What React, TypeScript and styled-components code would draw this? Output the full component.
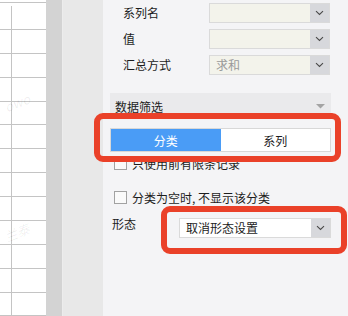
import React from 'react';
import styled, { createGlobalStyle } from 'styled-components';

const GlobalStyle = createGlobalStyle`
  html, body {
    margin: 0;
    padding: 0;
  }
  body {
    font-family: "Noto Sans CJK SC", "Noto Sans", sans-serif;
    font-size: 12px;
    color: #1c1c1c;
  }
`;

const Screen = styled.div`
  display: flex;
  width: 348px;
  height: 316px;
  overflow: hidden;
  position: relative;
`;

const Sheet = styled.div`
  width: 46px;
  flex: none;
  background: #fff;
  position: relative;
  overflow: hidden;
  padding-top: 3px;
  box-sizing: border-box;
  border-top: 1px solid #c4c4c4;
  margin-top: 2px;
`;

const SheetRow = styled.div<{ $h: number }>`
  display: flex;
  height: ${p => p.$h}px;
  border-bottom: 1px solid #c4c4c4;
  box-sizing: border-box;
`;

const SheetCell = styled.div<{ $w: number }>`
  width: ${p => p.$w}px;
  flex: none;
  border-right: 1px solid #c4c4c4;
  box-sizing: border-box;
`;

const Watermark = styled.span<{ $top: number }>`
  position: absolute;
  left: 4px;
  top: ${p => p.$top}px;
  font-size: 13px;
  font-style: italic;
  color: rgba(0, 0, 0, 0.07);
  transform: rotate(-22deg);
  white-space: nowrap;
`;

const Gutter = styled.div`
  width: 16px;
  flex: none;
  background: #d3d3d3;
`;

const Rail = styled.div`
  width: 41px;
  flex: none;
  background: #e8e8e8;
  border-left: 1px solid #ececec;
  box-sizing: border-box;
`;

const Panel = styled.div`
  flex: 1;
  background: #f4f4f6;
  padding: 3px 17px 0 7px;
  box-sizing: border-box;
`;

const Fields = styled.div`
  display: flex;
  flex-direction: column;
  gap: 6px;
  padding: 0 0 0 13px;
  margin-right: 1px;
`;

const FieldRow = styled.div`
  display: flex;
  align-items: center;
  height: 20px;
`;

const FieldLabel = styled.span<{ $w: number }>`
  width: ${p => p.$w}px;
  flex: none;
  line-height: 20px;
`;

const Select = styled.div<{ $bg: string; $muted?: boolean }>`
  flex: 1;
  display: flex;
  height: 20px;
  border: 1px solid #dadada;
  background: ${p => p.$bg};
  box-sizing: border-box;
  color: ${p => (p.$muted ? '#9a9a9a' : '#1c1c1c')};
`;

const SelectText = styled.span`
  flex: 1;
  padding-left: 6px;
  line-height: 18px;
  white-space: nowrap;
`;

const SelectArrow = styled.span`
  width: 19px;
  flex: none;
  background: #d7d8dc;
  display: flex;
  align-items: center;
  justify-content: center;
`;

const SectionHeader = styled.div`
  margin-top: 18px;
  height: 26px;
  background: #eaeaec;
  display: flex;
  align-items: center;
  justify-content: space-between;
  padding: 0 6px 0 5px;
  font-size: 12px;
`;

const Tabs = styled.div`
  margin-top: 9px;
  display: flex;
  height: 24px;
  border: 1px solid #d8d8d8;
  box-sizing: border-box;
  background: #fff;
`;

const Tab = styled.div<{ $active?: boolean }>`
  flex: 1;
  display: flex;
  align-items: center;
  justify-content: center;
  background: ${p => (p.$active ? '#4a9cf6' : '#fff')};
  color: ${p => (p.$active ? '#fff' : '#1c1c1c')};
`;

const CheckRow = styled.label<{ $top: number }>`
  display: flex;
  align-items: center;
  gap: 5px;
  margin-top: ${p => p.$top}px;
  padding-left: 4px;
  height: 14px;
`;

const CheckBox = styled.span`
  width: 13px;
  height: 13px;
  border: 1px solid #a2a2a2;
  background: #fafafa;
  box-sizing: border-box;
  flex: none;
`;

const ShapeRow = styled.div`
  display: flex;
  align-items: flex-start;
  margin-top: 14px;
`;

const ShapeLabel = styled.span`
  width: 67px;
  flex: none;
  line-height: 14px;
  margin-top: -1px;
  padding-left: 2px;
`;

const Highlight = styled.div<{ $l: number; $t: number; $w: number; $h: number }>`
  position: absolute;
  left: ${p => p.$l}px;
  top: ${p => p.$t}px;
  width: ${p => p.$w}px;
  height: ${p => p.$h}px;
  border: 6px solid #ea4129;
  border-radius: 9px;
  box-sizing: border-box;
  pointer-events: none;
`;

const Chevron = () => (
  <svg width="9" height="6" viewBox="0 0 9 6">
    <path d="M1 1.2 L4.5 4.5 L8 1.2" fill="none" stroke="#4a4a4a" strokeWidth="1.1" />
  </svg>
);

const Caret = () => (
  <svg width="9" height="5" viewBox="0 0 9 5">
    <path d="M0 0 H9 L4.5 4.5 Z" fill="#a4a4a4" />
  </svg>
);

const rowHeights = [24, 24, 24, 24, 23, 24, 24, 24, 24, 24, 24, 24, 23, 24];

export default function App() {
  return (
    <Screen>
      <GlobalStyle />
      <Sheet>
        {rowHeights.map((h, i) => (
          <SheetRow key={i} $h={h}>
            <SheetCell $w={12} />
          </SheetRow>
        ))}
        <Watermark $top={90}>owo</Watermark>
        <Watermark $top={220}>兰泰</Watermark>
      </Sheet>
      <Gutter />
      <Rail />
      <Panel>
        <Fields>
          <FieldRow>
            <FieldLabel $w={86}>系列名</FieldLabel>
            <Select $bg="#f3f3eb">
              <SelectText />
              <SelectArrow><Chevron /></SelectArrow>
            </Select>
          </FieldRow>
          <FieldRow>
            <FieldLabel $w={86}>值</FieldLabel>
            <Select $bg="#f3f3eb">
              <SelectText />
              <SelectArrow><Chevron /></SelectArrow>
            </Select>
          </FieldRow>
          <FieldRow>
            <FieldLabel $w={86}>汇总方式</FieldLabel>
            <Select $bg="#f3f3eb" $muted>
              <SelectText>求和</SelectText>
              <SelectArrow><Chevron /></SelectArrow>
            </Select>
          </FieldRow>
        </Fields>

        <SectionHeader>
          <span>数据筛选</span>
          <Caret />
        </SectionHeader>

        <Tabs>
          <Tab $active>分类</Tab>
          <Tab>系列</Tab>
        </Tabs>

        <CheckRow $top={4}>
          <CheckBox />
          <span>只使用前有限条记录</span>
        </CheckRow>
        <CheckRow $top={20}>
          <CheckBox />
          <span>分类为空时, 不显示该分类</span>
        </CheckRow>

        <ShapeRow>
          <ShapeLabel>形态</ShapeLabel>
          <Select $bg="#fff">
            <SelectText>取消形态设置</SelectText>
            <SelectArrow><Chevron /></SelectArrow>
          </Select>
        </ShapeRow>
      </Panel>

      <Highlight $l={94} $t={113} $w={247} $h={49} />
      <Highlight $l={161} $t={206} $w={186} $h={48} />
    </Screen>
  );
}
